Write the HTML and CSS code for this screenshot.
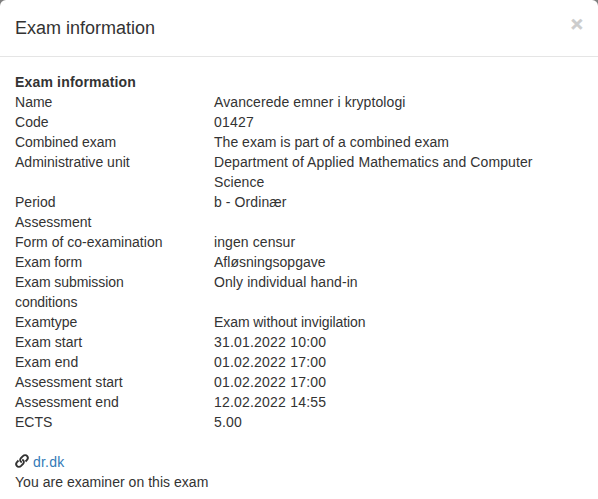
FILE: index.html
```html
<!DOCTYPE html>
<html lang="en">
<head>
<meta charset="utf-8">
<title>Exam information</title>
<link rel="stylesheet" href="styles.css">
</head>
<body>
<div class="modal">
  <header class="modal-header">
    <h4 class="modal-title">Exam information</h4>
    <button class="close" aria-label="Close">×</button>
  </header>
  <div class="modal-body">
    <strong class="section-title">Exam information</strong>
    <dl class="details">
      <dt>Name</dt><dd class="loose">Avancerede emner i kryptologi</dd>
      <dt>Code</dt><dd class="number">01427</dd>
      <dt class="tight">Combined exam</dt><dd>The exam is part of a combined exam</dd>
      <dt>Administrative unit</dt><dd class="loose">Department of Applied Mathematics and Computer Science</dd>
      <dt>Period</dt><dd class="loose">b - Ordinær</dd>
      <dt>Assessment</dt><dd></dd>
      <dt>Form of co-examination</dt><dd class="loose">ingen censur</dd>
      <dt class="tight">Exam form</dt><dd>Afløsningsopgave</dd>
      <dt class="tight">Exam submission conditions</dt><dd class="loose">Only individual hand-in</dd>
      <dt>Examtype</dt><dd class="tight">Exam without invigilation</dd>
      <dt>Exam start</dt><dd class="number">31.01.2022 10:00</dd>
      <dt>Exam end</dt><dd class="number">01.02.2022 17:00</dd>
      <dt>Assessment start</dt><dd class="number">01.02.2022 17:00</dd>
      <dt>Assessment end</dt><dd class="number">12.02.2022 14:55</dd>
      <dt>ECTS</dt><dd class="number">5.00</dd>
    </dl>
    <div class="link-row">
      <svg class="link-icon" viewBox="0 0 14 14" aria-hidden="true">
        <path d="M6.800 8.400C4.800 7.500 4.700 5.500 5.900 4.200L7.900 2.100C9.200.8 11.200.9 12.200 2.100C13.100 3.200 13 4.800 12 5.900L10.500 7.500"/>
        <path d="M7.200 5.600C9.200 6.500 9.300 8.500 8.100 9.800L6.100 11.900C4.800 13.200 2.800 13.100 1.800 11.900C.9 10.800 1 9.200 2 8.100L3.500 6.500"/>
      </svg>
      <a class="link" href="#">dr.dk</a>
    </div>
    <p class="role">You are examiner on this exam</p>
  </div>
</div>
</body>
</html>
```

FILE: styles.css
```css
* { box-sizing: border-box; }
body {
  margin: 0;
  background: #7f7f7f;
  color: #333;
  font: 14px/20px "Liberation Sans", Arial, sans-serif;
  overflow: hidden;
}
.modal {
  height: 499px;
  background: #fff;
  border-radius: 6px 6px 0 0;
}
.modal-header {
  display: flex;
  justify-content: space-between;
  align-items: flex-start;
  height: 57px;
  padding: 15px;
  border-bottom: 1px solid #e5e5e5;
}
.modal-title {
  margin: 0;
  font-size: 18px;
  font-weight: 400;
  line-height: 26px;
}
.close {
  margin: -2px 0 0;
  padding: 0;
  border: 0;
  background: none;
  color: #ccc;
  font: bold 21px/21px "Liberation Sans", Arial, sans-serif;
  -webkit-text-stroke: .5px #ccc;
}
.modal-body { padding: 15px; }
.section-title {
  display: block;
  letter-spacing: .17px;
}
.details {
  display: grid;
  grid-template-columns: 169px 340px;
  column-gap: 30px;
  margin: 0 0 20px;
}
dt, dd { letter-spacing: .02px; }
dd { margin: 0; }
.loose { letter-spacing: .09px; }
.tight { letter-spacing: -.07px; }
.number { letter-spacing: .2px; }
.link-row {
  display: flex;
  align-items: center;
  gap: 4px;
}
.link-icon {
  width: 14px;
  height: 14px;
  margin-top: -2px;
  overflow: visible;
  fill: none;
  stroke: #333;
  stroke-width: 1.9;
}
.link {
  color: #337ab7;
  letter-spacing: .2px;
  text-decoration: none;
}
.role {
  margin: 0;
  letter-spacing: .03px;
}
```
